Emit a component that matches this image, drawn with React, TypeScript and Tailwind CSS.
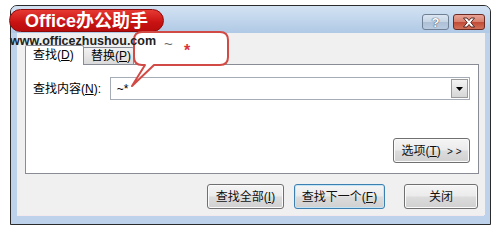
import React from "react";

const F = "font-['Liberation_Sans','Noto_Sans_CJK_SC',sans-serif]";

function Btn({ children, w, def }: { children: React.ReactNode; w: string; def?: boolean }) {
  return (
    <div
      className={`${w} h-[25px] rounded-[3px] border ${
        def ? "border-[#3c7fb1] shadow-[inset_0_0_0_1px_#c4e5f6]" : "border-[#707070] shadow-[inset_0_0_0_1px_#fbfbfb]"
      } flex items-center justify-center text-[12px] text-[#111] bg-[linear-gradient(#f5f5f5_0%,#ebebeb_48%,#dcdcdc_52%,#d0d0d0_100%)]`}
    >
      {children}
    </div>
  );
}

export default function App() {
  return (
    <div className={`relative w-[497px] h-[231px] bg-white overflow-hidden ${F}`}>
      <div className="pl-[10px] pt-[5px]">
        <div className="w-[481px] h-[220px] border border-[#2b2b2b] rounded-t-[7px] bg-[#bed3eb] flex flex-col overflow-hidden">
          {/* title bar */}
          <div className="h-[27px] shrink-0 flex justify-end items-start pt-[8px] pr-[5px] gap-[4px] bg-[linear-gradient(#d3e2f3,#b0c9e5)]">
            <div className="w-[27px] h-[16px] rounded-[3px] border border-[#6f7f94] bg-[linear-gradient(#dbe6f2_0%,#c6d4e4_50%,#adc0d6_51%,#b9cbe0_100%)] flex items-center justify-center">
              <span className="text-[13px] leading-none font-bold text-white [text-shadow:0_0_1px_#34445a,0_0_1px_#34445a]">?</span>
            </div>
            <div className="w-[32px] h-[16px] rounded-[3px] border border-[#6b2a22] bg-[linear-gradient(#e8a597_0%,#d77f6d_50%,#c24a35_51%,#d0705a_100%)] flex items-center justify-center">
              <svg width="14" height="11" viewBox="0 0 14 11">
                <path d="M1.5 1 H5 L7 3.5 L9 1 H12.5 L8.8 5.5 L12.5 10 H9 L7 7.5 L5 10 H1.5 L5.2 5.5 Z" fill="#fff" stroke="#4a1c16" strokeWidth="0.9" />
              </svg>
            </div>
          </div>
          {/* client */}
          <div className="h-[182px] shrink-0 ml-[6px] mr-[5px] bg-[#f0f0f0] pl-[8px] pr-[7px] pt-[12px] flex flex-col">
            {/* tabs */}
            <div className="flex items-end h-[19px]">
              <div className="w-[59px] h-[20px] -mb-px relative z-10 bg-white border border-b-0 border-[#898c95] rounded-t-[2px] pl-[7px] text-[12px] leading-[19px] text-black">
                查找(<u>D</u>)
              </div>
              <div className="w-[50px] h-[17px] border border-l-0 border-b-0 border-[#898c95] rounded-tr-[2px] bg-[linear-gradient(#f2f2f2,#dadada)] pl-[7px] text-[12px] leading-[16px] text-black">
                替换(<u>P</u>)
              </div>
            </div>
            <div className="w-[454px] h-[110px] border border-[#898c95] bg-white pl-[7px] pr-[8px] pt-[12px] pb-[10px] flex flex-col">
              <div className="flex items-center">
                <div className="w-[77px] text-[12px] text-black">查找内容(<u>N</u>):</div>
                <div className="w-[362px] h-[23px] border border-[#a5acb5] flex items-center justify-between pl-[6px] pr-px">
                  <span className="text-[12px] text-black">~*</span>
                  <div className="w-[17px] h-[19px] border border-[#9b9b9b] bg-[linear-gradient(#f4f4f4,#d6d6d6)] flex items-center justify-center">
                    <svg width="7" height="4" viewBox="0 0 7 4"><path d="M0 0 H7 L3.5 4 Z" fill="#000" /></svg>
                  </div>
                </div>
              </div>
              <div className="flex-1" />
              <div className="flex justify-end">
                <Btn w="w-[77px]">
                  <span>
                    选项(<u>T</u>) <span className="text-[10px] ml-[3px]">&gt; &gt;</span>
                  </span>
                </Btn>
              </div>
            </div>
            <div className="flex justify-end mt-[10px]">
              <Btn w="w-[77px]">查找全部(<u>I</u>)</Btn>
              <div className="w-[10px]" />
              <Btn w="w-[91px]" def>查找下一个(<u>F</u>)</Btn>
              <div className="w-[19px]" />
              <Btn w="w-[74px]">关闭</Btn>
            </div>
          </div>
          <div className="flex-1 mx-[6px] border-t border-[#f4e9ee]" />
        </div>
      </div>

      {/* logo pill */}
      <div className="absolute left-[9px] top-[9px] w-[155px] h-[23px] rounded-[12px] border border-[#8d0a0a] bg-[linear-gradient(#e63a33,#c81212_60%,#b80d0d)] pl-[15px] flex items-center">
        <span className="text-[18px] font-bold text-white leading-none">Office办公助手</span>
      </div>
      {/* callout */}
      <svg className="absolute left-0 top-0 pointer-events-none" width="497" height="231" viewBox="0 0 497 231">
        <path
          d="M142 32 H220 Q228 32 228 40 V57 Q228 65 220 65 H154 L132 86 L145 65 H142 Q134 65 134 57 V40 Q134 32 142 32 Z"
          fill="#fff"
          stroke="#d24a45"
          strokeWidth="2"
          strokeLinejoin="round"
        />
      </svg>
      <span className="absolute left-[164px] top-[36px] text-[15px] text-[#666] leading-none">~</span>
      <span className="absolute left-[184px] top-[43px] text-[16px] font-bold text-[#d8343a] leading-none">*</span>
      {/* url watermark */}
      <div className="absolute left-[10px] top-[34px] text-[12.5px] font-bold text-[#222] leading-[14px]">
        www.officezhushou.com
      </div>
    </div>
  );
}
